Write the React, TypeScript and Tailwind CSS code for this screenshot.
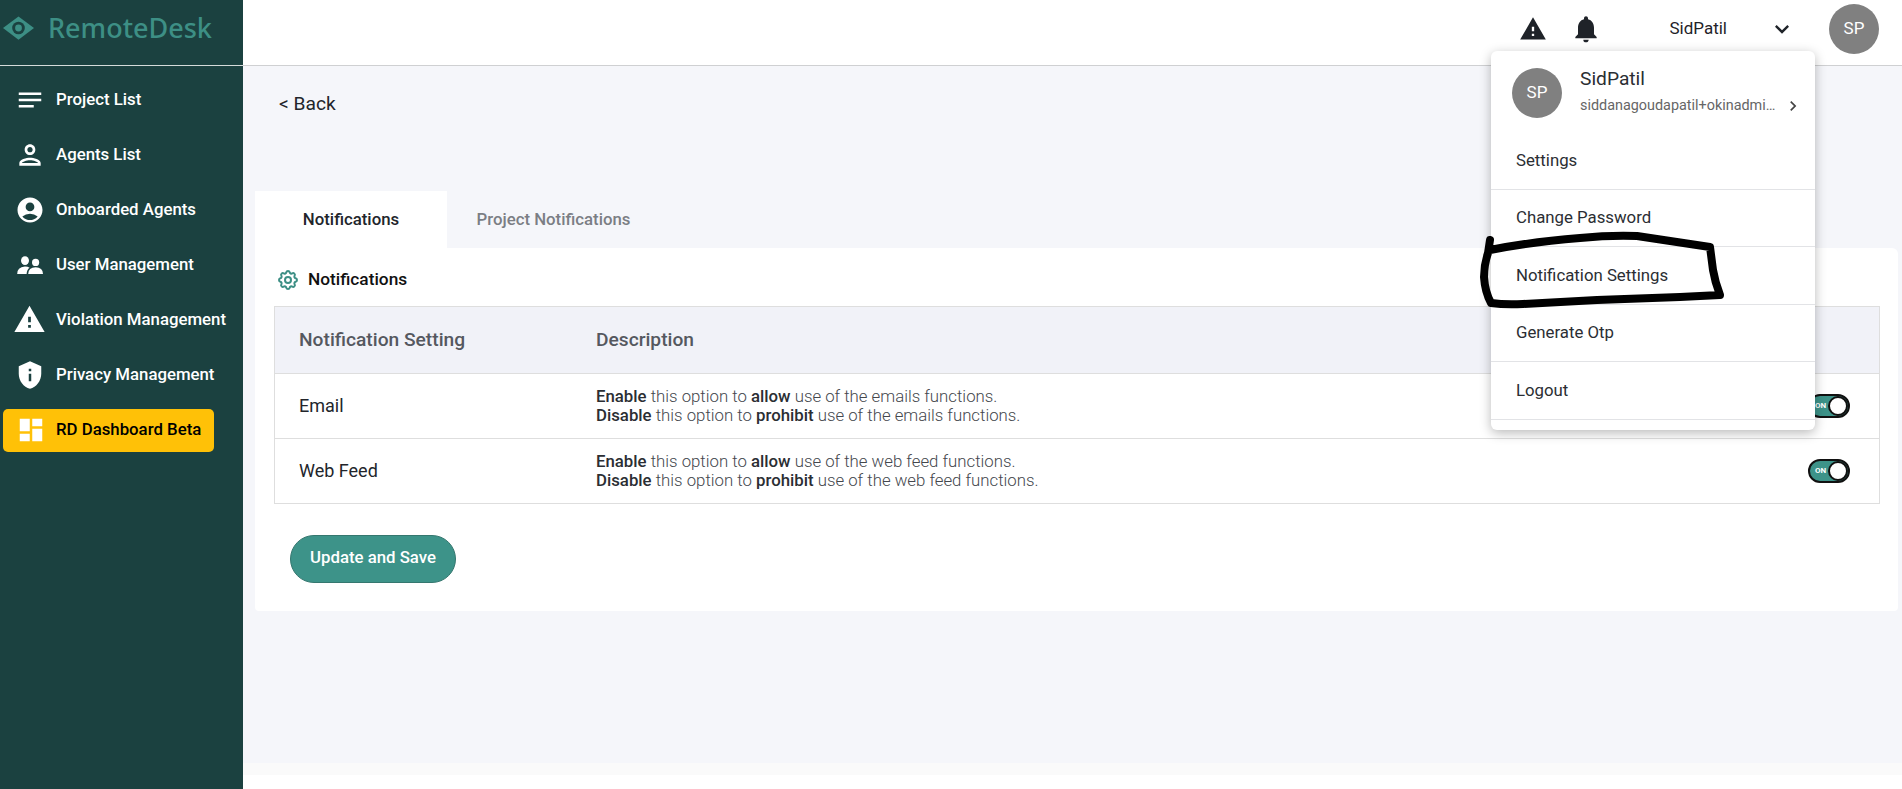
import {
  MdAccountCircle,
  MdChevronRight,
  MdDashboard,
  MdKeyboardArrowDown,
  MdNotes,
  MdNotifications,
  MdOutlinePerson,
  MdPrivacyTip,
  MdWarning,
} from 'react-icons/md'
import { TbSettings } from 'react-icons/tb'

function UsersIcon({ className }: { className?: string }) {
  return (
    <svg viewBox="0 0 26 18" fill="currentColor" className={className}>
      <ellipse cx="8" cy="4.6" rx="4" ry="4.4" />
      <circle cx="18.6" cy="6.4" r="3.6" />
      <path d="M0.2 18 Q0 11 8 10.4 Q10.8 10.4 12.6 11.8 Q9.8 13.6 9.6 18 Z" />
      <path d="M11.2 18 Q11.4 11.2 18.6 11.2 Q25.8 11.2 26 18 Z" />
    </svg>
  )
}

const navItems = [
  { label: 'Project List', icon: MdNotes, size: 'w-[30px] h-[30px]' },
  { label: 'Agents List', icon: MdOutlinePerson, size: 'w-[32px] h-[32px]' },
  { label: 'Onboarded Agents', icon: MdAccountCircle, size: 'w-[30px] h-[30px]' },
  { label: 'User Management', icon: UsersIcon, size: 'w-[26px] h-[18px]' },
  { label: 'Violation Management', icon: MdWarning, size: 'w-[33px] h-[33px]' },
  { label: 'Privacy Management', icon: MdPrivacyTip, size: 'w-[30px] h-[30px]' },
]

const menuItems = ['Settings', 'Change Password', 'Notification Settings', 'Generate Otp', 'Logout']

function Avatar() {
  return (
    <div className="w-[50px] h-[50px] rounded-full bg-[#808080] text-white text-[17px] flex items-center justify-center shrink-0">
      SP
    </div>
  )
}

function Toggle() {
  return (
    <div className="w-[42px] h-[24px] rounded-full bg-[#3d9389] border-2 border-[#111] flex items-center justify-between pl-[5px] shrink-0">
      <span className="text-[8px] font-bold text-white leading-none">ON</span>
      <span className="w-[20px] h-[20px] rounded-full bg-white border-2 border-[#111]" />
    </div>
  )
}

function SettingRow({ name, feature }: { name: string; feature: string }) {
  return (
    <div className="flex items-center h-[65px] border-t border-[#dedede]">
      <div className="w-[321px] pl-[24px] pb-[2px] text-[18px] text-[#22252b]">{name}</div>
      <div className="flex-1 text-[16.8px] leading-[19.5px] font-light text-[#44474d]">
        <div>
          <span className="font-medium text-[#2b2e33]">Enable</span> this option to{' '}
          <span className="font-medium text-[#2b2e33]">allow</span> use of the {feature} functions.
        </div>
        <div>
          <span className="font-medium text-[#2b2e33]">Disable</span> this option to{' '}
          <span className="font-medium text-[#2b2e33]">prohibit</span> use of the {feature} functions.
        </div>
      </div>
      <div className="pr-[29px]">
        <Toggle />
      </div>
    </div>
  )
}

export default function App() {
  return (
    <div className="relative flex h-[789px] overflow-hidden bg-white font-['Roboto',sans-serif]">
      <aside className="w-[243px] shrink-0 bg-[#1b4140] text-white">
        <div className="h-[66px] flex items-center gap-[14px] pl-[3px] pb-[9px] border-b border-[#d5dbda]">
          <svg viewBox="0 0 32 24" className="w-[31px] h-[24px]">
            <path d="M16 0 L32 12 L16 24 L0 12 Z" fill="#3d8f85" />
            <circle cx="16" cy="12" r="6.5" fill="#1b4140" />
            <circle cx="16" cy="12" r="3.5" fill="#3d8f85" />
          </svg>
          <span className="text-[27px] font-medium font-['Noto_Sans',sans-serif] text-[#3d8f85]">RemoteDesk</span>
        </div>
        <nav className="pt-[6px]">
          {navItems.map((item) => (
            <div key={item.label} className="h-[55.1px] flex items-center text-[16.8px] font-medium">
              <span className="w-[56px] flex justify-center pl-[3px]">
                <item.icon className={item.size} />
              </span>
              {item.label}
            </div>
          ))}
          <div className="mx-[3px] mt-[6px] w-[211px] h-[43px] rounded-[5px] bg-[#ffc107] flex items-center text-[16.8px] font-medium text-black">
            <span className="w-[53px] flex justify-center pl-[3px]">
              <MdDashboard className="w-[30px] h-[30px] text-white" />
            </span>
            RD Dashboard Beta
          </div>
        </nav>
      </aside>

      <div className="flex-1 flex flex-col min-w-0">
        <header className="h-[66px] shrink-0 bg-white border-b border-[#cfd0d2] flex items-center pb-[7px] text-[#1f2329]">
          <div className="ml-auto flex items-center">
            <MdWarning className="w-[28px] h-[28px]" />
            <MdNotifications className="w-[32px] h-[32px] ml-[23px]" />
            <span className="ml-[67px] text-[17px]">SidPatil</span>
            <MdKeyboardArrowDown className="w-[28px] h-[28px] ml-[41px]" />
            <div className="ml-[33px] mr-[23px]">
              <Avatar />
            </div>
          </div>
        </header>

        <main className="flex-1 bg-[#f5f6fa] pl-[12px] pr-[4px]">
          <div className="h-[125px] pt-[24px] pl-[24px] text-[19.2px] text-[#22252b]">&lt; Back</div>
          <div className="flex h-[57px] text-[16.8px] font-medium">
            <div className="w-[192px] bg-white flex items-center justify-center text-[#22252b]">Notifications</div>
            <div className="w-[213px] flex items-center justify-center text-[#7b7e84]">Project Notifications</div>
          </div>
          <section className="h-[363px] bg-white rounded-tr-[6px] rounded-b-[4px] pl-[19px] pr-[18px]">
            <div className="h-[58px] flex items-center gap-[8px] pl-[2px] pt-[5px] text-[17.3px] font-medium text-[#111]">
              <TbSettings className="w-[24px] h-[24px] text-[#3d8f85]" />
              Notifications
            </div>
            <div className="border border-[#dedede]">
              <div className="h-[66px] bg-[#f1f2f8] flex items-center text-[19.2px] font-medium text-[#55585f]">
                <div className="w-[321px] pl-[24px]">Notification Setting</div>
                <div>Description</div>
              </div>
              <SettingRow name="Email" feature="emails" />
              <SettingRow name="Web Feed" feature="web feed" />
            </div>
            <button className="mt-[31px] ml-[16px] w-[166px] h-[48px] rounded-full bg-[#3d9389] border border-[#35776f] text-white text-[16.8px] font-medium pb-[2px]">
              Update and Save
            </button>
          </section>
        </main>
        <div className="h-[12px] shrink-0 bg-[#fafafa]" />
        <div className="h-[14px] shrink-0 bg-white" />
      </div>

      {/* profile dropdown */}
      <div className="absolute left-[1491px] top-[51px] w-[324px] h-[379px] bg-white rounded-[6px] shadow-[0_3px_12px_rgba(0,0,0,0.28)] text-[#2b2e33]">
        <div className="h-[81px] flex items-start pt-[17px] pl-[21px]">
          <Avatar />
          <div className="ml-[18px] min-w-0">
            <div className="text-[19.2px] leading-[22px]">SidPatil</div>
            <div className="mt-[5px] flex items-center">
              <span className="w-[196px] truncate text-[14.4px] text-[#666]">siddanagoudapatil+okinadmin@gmail.com</span>
              <MdChevronRight className="w-[20px] h-[20px] ml-[7px] text-[#444]" />
            </div>
          </div>
        </div>
        {menuItems.map((item) => (
          <div key={item} className="h-[57.6px] flex items-center pl-[25px] border-b border-[#e2e3e6] text-[16.8px]">
            {item}
          </div>
        ))}
      </div>

      {/* hand drawn marker around the menu item */}
      <svg className="absolute left-0 top-0 pointer-events-none" width="1902" height="789" fill="none">
        <path
          d="M1490 240 L1488 253 Q1484 265 1484 277 Q1485 292 1491 303 Q1505 305 1523 304 L1597 300 L1680 297 L1720 295 Q1715 282 1713 270 L1710 247 L1637 236 Q1610 235 1580 238 Q1530 242 1490 250"
          stroke="#000"
          strokeWidth="8"
          strokeLinecap="round"
          strokeLinejoin="round"
        />
      </svg>
    </div>
  )
}
